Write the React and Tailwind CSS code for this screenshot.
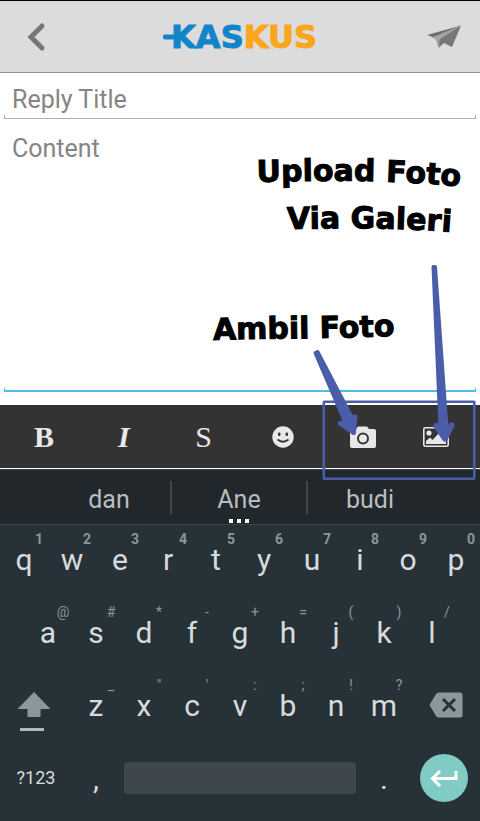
import React from 'react';

const topRow = [
    ['q', '1'], ['w', '2'], ['e', '3'], ['r', '4'], ['t', '5'],
    ['y', '6'], ['u', '7'], ['i', '8'], ['o', '9'], ['p', '0'],
];

const homeRow = [
    ['a', '@'], ['s', '#'], ['d', '*'], ['f', '-'], ['g', '+'],
    ['h', '='], ['j', '('], ['k', ')'], ['l', '/'],
];

const bottomRow = [
    ['z', '_'], ['x', '"'], ['c', "'"], ['v', ':'], ['b', ';'], ['n', '!'], ['m', '?'],
];

const Key = ({ letter, hint, boldHint }) => (
    <button type="button" className="relative flex h-full min-w-0 flex-1 items-center justify-center pb-1 text-[30px] leading-none text-[#d8dbdc]">
        {letter}
        <span className={`absolute left-1/2 top-1.5 ml-px w-7 text-center text-sm leading-4 text-[#8b969b] ${boldHint ? 'font-bold' : 'font-normal'}`}>
            {hint}
        </span>
    </button>
);

const Header = () => (
    <header className="grid h-[73px] grid-cols-[72px_1fr_72px] items-center border-t border-b border-t-black border-b-[#949494] bg-[#dcdcdc]">
        <button type="button" aria-label="Back" className="flex h-full items-center justify-center">
            <svg width="20" height="30" viewBox="0 0 20 30" fill="none" stroke="#777777" strokeWidth="5" strokeLinecap="round">
                <path d="M16 4 L5 15 L16 26" />
            </svg>
        </button>
        <h1 className="flex items-center justify-center font-['DejaVu_Sans'] text-[32px] font-bold leading-none [-webkit-text-stroke-width:1px]">
            <svg width="12" height="6" viewBox="0 0 12 6" className="-mr-1" aria-hidden="true">
                <rect width="12" height="5" y="0.5" rx="2" fill="#1484ca" />
            </svg>
            <span className="text-[#1484ca]">KAS</span>
            <span className="text-[#fba61c]">KUS</span>
        </h1>
        <button type="button" aria-label="Send" className="flex h-full items-center justify-center">
            <svg width="36" height="24" viewBox="0 0 36 24">
                <path d="M1 10 L35 .5 L12 14 Z" fill="#6f6f6f" />
                <path d="M35 .5 L10 14 L12.500 23 L17 17 Z" fill="#9a9a9a" />
                <path d="M35 .5 L14 14 L13 22.500 L18 18 L26 22 Z" fill="#777777" />
                <path d="M6 12.500 L35 .5 L11.500 15.500 Z" fill="#a6a6a6" />
            </svg>
        </button>
    </header>
);

const Editor = () => (
    <form className="bg-white pb-[13px] text-[25px] text-[#808080]">
        <input
            type="text"
            aria-label="Reply Title"
            placeholder="Reply Title"
            className="block h-[42px] w-full px-3 pt-[10px] outline-none placeholder:text-[#858585]"
        />
        <div className="mx-1 h-1 border-x border-b border-[#b0b0b0]" />
        <textarea
            aria-label="Content"
            placeholder="Content"
            className="block h-[269px] w-full resize-none px-3 pt-[15px] leading-[30px] outline-none placeholder:text-[#858585]"
        />
        <div className="mx-1 h-1 border-x border-b-2 border-[#4fbde6]" />
    </form>
);

const Toolbar = () => (
    <div className="grid h-16 grid-cols-[80fr_80fr_80fr_80fr_80fr_66fr] border-b border-white bg-[#333333] pl-1 pr-[11px] font-['Liberation_Serif'] text-[30px] text-[#e8e8e8]">
        <button type="button" className="font-bold">B</button>
        <button type="button" className="font-bold italic">I</button>
        <button type="button">S</button>
        <button type="button" aria-label="Smiley" className="flex items-center justify-center">
            <svg width="22" height="22" viewBox="0 0 22 22">
                <circle cx="11" cy="11" r="10.7" fill="#e8e8e8" />
                <rect x="6" y="6.5" width="2.4" height="3.4" rx="1" fill="#333333" />
                <rect x="13.6" y="6.5" width="2.4" height="3.4" rx="1" fill="#333333" />
                <path d="M5.5 13.5 Q11 18 16.5 13.5" fill="none" stroke="#333333" strokeWidth="1.7" />
            </svg>
        </button>
        <button type="button" aria-label="Camera" className="flex items-center justify-center">
            <svg width="26" height="22" viewBox="0 0 26 22">
                <path d="M2 3 H6 L8 .5 H17 L19 3 H24 Q26 3 26 5 V20 Q26 22 24 22 H2 Q0 22 0 20 V5 Q0 3 2 3 Z" fill="#e8e8e8" />
                <circle cx="13" cy="12.5" r="5" fill="none" stroke="#333333" strokeWidth="2" />
            </svg>
        </button>
        <button type="button" aria-label="Gallery" className="flex items-center justify-center">
            <svg width="26" height="20" viewBox="0 0 26 20">
                <rect x="0.8" y="0.8" width="24.4" height="18.4" rx="1.5" fill="none" stroke="#e8e8e8" strokeWidth="1.6" />
                <circle cx="6" cy="6" r="2.6" fill="#e8e8e8" />
                <path d="M3 17 V14 L7 10.5 L9.5 13 L17 5 L23 11 V17 Z" fill="#e8e8e8" />
            </svg>
        </button>
    </div>
);

const Suggestions = () => (
    <div className="grid h-14 grid-cols-[122fr_138fr_124fr] items-center border-t border-b border-[#3a4548] bg-[#21272b] px-12 text-[25px] text-[#b9bdbf]">
        <button type="button" className="h-full pt-1.5">dan</button>
        <button type="button" className="relative h-full pt-1.5">
            <span className="absolute left-0 top-[11px] h-[33px] w-0.5 bg-[#41484c]" />
            Ane
            <span className="absolute inset-x-0 bottom-px flex justify-center gap-1">
                <i className="size-1 bg-white" />
                <i className="size-1 bg-white" />
                <i className="size-1 bg-white" />
            </span>
            <span className="absolute right-0 top-[11px] h-[33px] w-0.5 bg-[#41484c]" />
        </button>
        <button type="button" className="h-full pt-1.5">budi</button>
    </div>
);

const Keyboard = () => (
    <div className="bg-[#273238] pb-[9px]">
        <div className="flex h-[73px]">
            {topRow.map(([letter, hint]) => <Key key={letter} letter={letter} hint={hint} boldHint />)}
        </div>
        <div className="flex h-[73px] px-[5%]">
            {homeRow.map(([letter, hint]) => <Key key={letter} letter={letter} hint={hint} />)}
        </div>
        <div className="flex h-[73px]">
            <button type="button" aria-label="Shift" className="flex w-[15%] items-center justify-center pr-1 pt-2.5">
                <svg width="34" height="42" viewBox="0 0 34 42">
                    <path d="M17 0 L33.5 17 H23.5 V25 H10.5 V17 H.5 Z" fill="#8c979c" />
                    <rect x="3" y="36" width="24" height="3" fill="#b4b8ba" />
                </svg>
            </button>
            {bottomRow.map(([letter, hint]) => <Key key={letter} letter={letter} hint={hint} />)}
            <button type="button" aria-label="Delete" className="flex w-[15%] items-center justify-center pl-1 pb-1.5">
                <svg width="34" height="26" viewBox="0 0 34 26">
                    <path d="M10 .5 H31 Q33.500 .5 33.500 3 V23 Q33.500 25.500 31 25.500 H10 Q8 25.500 7 24 L.5 13 L7 2 Q8 .5 10 .5 Z" fill="#8c979c" />
                    <path d="M14 7 L26 19 M26 7 L14 19" stroke="#273238" strokeWidth="3" />
                </svg>
            </button>
        </div>
        <div className="flex h-[68px] items-center text-[30px] text-[#d8dbdc]">
            <button type="button" className="w-[15%] text-lg">?123</button>
            <button type="button" className="w-[10%]">,</button>
            <button type="button" aria-label="Space" className="mx-1 h-8 flex-1 rounded bg-[#3d474c]" />
            <button type="button" className="w-[10%]">.</button>
            <div className="flex w-[15%] justify-center">
                <button type="button" aria-label="Enter" className="flex size-12 items-center justify-center rounded-full bg-[#80cbc4]">
                    <svg width="28" height="18" viewBox="0 0 28 18" fill="none" stroke="#ffffff" strokeWidth="3">
                        <path d="M26 2 V9.500 H3 M10 2 L2.500 9.500 L10 17" />
                    </svg>
                </button>
            </div>
        </div>
    </div>
);

// Hand-drawn notes pointing at the camera and gallery buttons
const Notes = () => (
    <svg width="480" height="484" viewBox="0 0 480 484" className="pointer-events-none absolute right-0 top-0">
        <defs>
            <path id="note-upload" d="M257 182 C310 181 380 178 476 188" />
            <path id="note-gallery" d="M287 229 C350 228 400 227 476 234" />
            <path id="note-camera" d="M213 340 C280 338 340 339 412 335" />
        </defs>
        <g className="font-['DejaVu_Sans'] text-[30px] font-bold" fill="#000000" stroke="#000000" strokeWidth="1">
            <text><textPath href="#note-upload">Upload Foto</textPath></text>
            <text><textPath href="#note-gallery">Via Galeri</textPath></text>
            <text><textPath href="#note-camera">Ambil Foto</textPath></text>
        </g>
        <g fill="#4b5da9" stroke="#4b5da9" strokeLinejoin="round" strokeLinecap="round">
            <path d="M315.500 353 L317.500 352 L352 418 L355 416.500 L354 433 L340.500 423.500 L345 421.500 Z" strokeWidth="4" />
            <path d="M340.500 423.500 L353 432 L355 417" fill="none" strokeWidth="5" />
            <path d="M433.500 267 L435 267 L446.500 428 L445 438 L440.500 428 Z" strokeWidth="4" />
            <path d="M436.500 426 L445 438.500 L451.500 425.500" fill="none" strokeWidth="6" />
            <rect x="323.800" y="401.800" width="150.500" height="77" rx="0.500" fill="none" strokeWidth="2.600" />
        </g>
    </svg>
);

const App = () => (
    <main className="relative font-['Roboto',sans-serif]">
        <Header />
        <Editor />
        <Toolbar />
        <Suggestions />
        <Keyboard />
        <Notes />
    </main>
);

export default App;
